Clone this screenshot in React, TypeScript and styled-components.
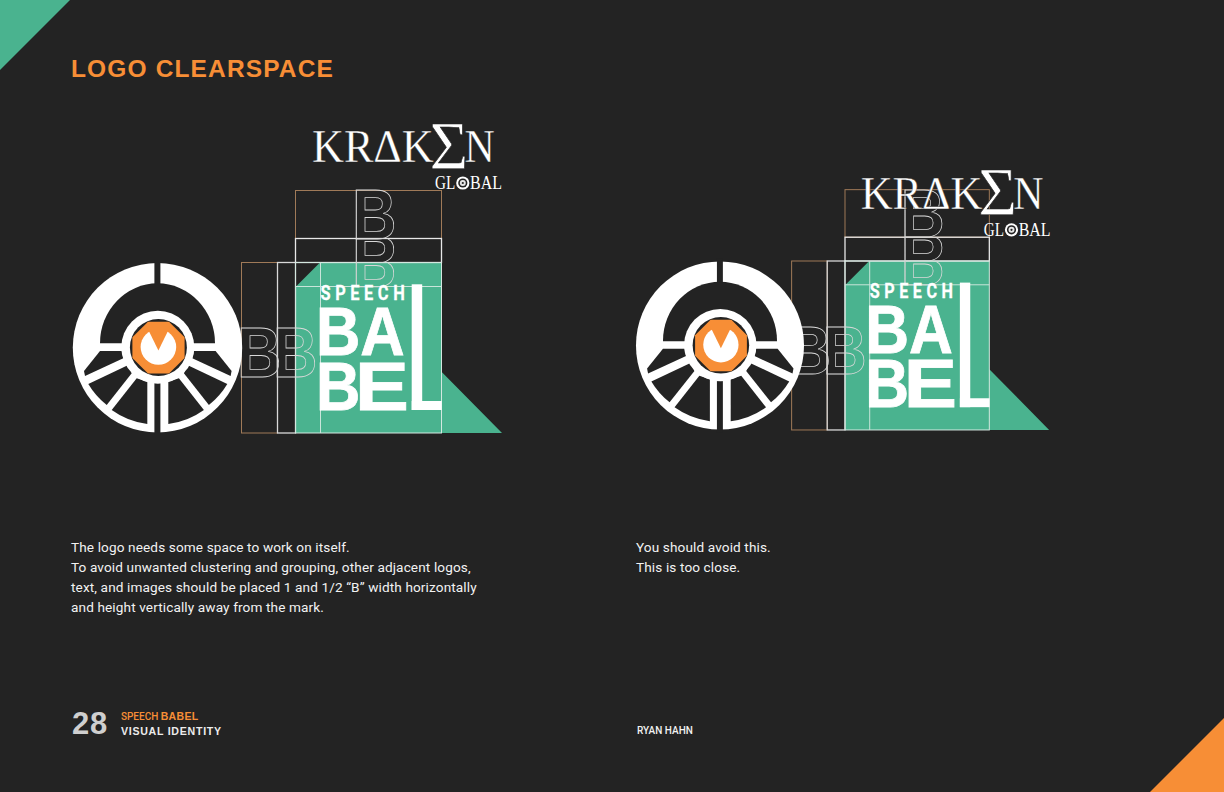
import React from "react";
import styled, { createGlobalStyle } from "styled-components";

const ORANGE = "#f78e36";
const GREEN = "#4ab38f";
const DARK = "#232323";

const Global = createGlobalStyle`
  html, body { margin: 0; padding: 0; background: ${DARK}; }
`;

const Page = styled.div`
  position: relative;
  width: 1224px;
  height: 792px;
  overflow: hidden;
  background: ${DARK};
  color: #fff;
  display: flex;
  flex-direction: column;
  padding: 55px 0 0 71px;
  box-sizing: border-box;
`;

const Corner = styled.div<{ $at: "tl" | "br" }>`
  position: absolute;
  width: ${(p) => (p.$at === "tl" ? 70 : 74)}px;
  height: ${(p) => (p.$at === "tl" ? 70 : 74)}px;
  ${(p) => (p.$at === "tl" ? "left:0;top:0;" : "right:0;bottom:0;")}
  background: ${(p) => (p.$at === "tl" ? GREEN : ORANGE)};
  clip-path: ${(p) =>
    p.$at === "tl" ? "polygon(0 0,100% 0,0 100%)" : "polygon(100% 0,100% 100%,0 100%)"};
`;

const Title = styled.h1`
  margin: 0;
  font: 700 24.5px/28px "Liberation Sans", Arial, sans-serif;
  letter-spacing: 1.14px;
  color: ${ORANGE};
`;

const Columns = styled.div`
  display: grid;
  grid-template-columns: 565px 565px;
`;

const Figures = styled(Columns)`
  margin-top: 32px;
`;

const Art = styled.svg`
  display: block;
  width: 450px;
  height: 330px;
  overflow: visible;
`;

const Captions = styled(Columns)`
  margin-top: 92px;
`;

const Caption = styled.p`
  margin: 0;
  font: 400 13.6px/20px Roboto, "Liberation Sans", sans-serif;
  letter-spacing: 0.12px;
  color: #f2f2f2;
`;

const Footer = styled(Columns)`
  position: absolute;
  left: 71px;
  top: 706px;
`;

const Folio = styled.div`
  display: flex;
  align-items: center;
  gap: 13px;
  padding-left: 1px;
`;

const PageNumber = styled.span`
  font: 700 31px/36px "Liberation Sans", Arial, sans-serif;
  letter-spacing: 0.7px;
  color: #cfcfcf;
`;

const FolioText = styled.div`
  display: flex;
  flex-direction: column;
  gap: 2px;
`;

const Brand = styled.span`
  font: 500 10px/13px Roboto, "Liberation Sans", sans-serif;
  color: ${ORANGE};
  b {
    font: 700 10.5px/13px "Liberation Sans", Arial, sans-serif;
    letter-spacing: 0.3px;
  }
`;

const Section = styled.span`
  font: 700 10.6px/13px "Liberation Sans", Arial, sans-serif;
  letter-spacing: 0.74px;
  color: #ececec;
`;

const Author = styled.span`
  align-self: end;
  font: 500 10px/13px Roboto, "Liberation Sans", sans-serif;
  color: #f2f2f2;
  padding: 0 0 5px 1px;
`;

const OutlineLetter = styled.text`
  font: 700 70px "Liberation Sans", Arial, sans-serif;
  fill: none;
  stroke: #d8d8d8;
  stroke-width: 0.8px;
`;

const MarkSmall = styled.text`
  font: 700 21px Roboto, "Liberation Sans", sans-serif;
  fill: #fff;
  stroke: #fff;
  stroke-width: 0.3px;
`;

const MarkBig = styled.text`
  font: 700 69px "Liberation Sans", Arial, sans-serif;
  fill: #fff;
  stroke: #fff;
  stroke-width: 0.8px;
`;

const Serif = styled.text<{ $size: number; $thin?: number }>`
  font: 400 ${(p) => p.$size}px "Liberation Serif", "Times New Roman", serif;
  fill: #fff;
  stroke: ${DARK};
  stroke-width: ${(p) => p.$thin ?? 0}px;
`;

const Wheel: React.FC<{ transform?: string }> = ({ transform }) => {
  const half = (
    <>
      <path d="M100 351L121.7 351L123.3 358.3L85 376L84 371Z" fill={DARK} />
      <path d="M88.3 384L128.3 365L131.7 373.3L106.7 405A77 77 0 0 1 88.3 384Z" fill={DARK} />
      <path d="M111.7 410L136.7 378.3L147.3 381.7L147.3 424A77 77 0 0 1 111.7 410Z" fill={DARK} />
    </>
  );
  return (
    <g transform={transform}>
      <circle cx="157.5" cy="347.7" r="84.7" fill="#fff" />
      <path d="M100 343.3A57.5 60 0 0 1 215 343.3Z" fill={DARK} />
      <rect x="154.4" y="260" width="6" height="24" fill={DARK} />
      <rect x="154.4" y="380" width="6" height="55" fill={DARK} />
      {half}
      <g transform="translate(315.6 0) scale(-1 1)">{half}</g>
      <circle cx="157.8" cy="347.3" r="36.5" fill="#fff" />
      <circle cx="158.4" cy="347.5" r="28.5" fill={DARK} />
      <path
        d="M148 321.7H169L184.6 337.3V358L169 373.6H148L132.4 358V337.3Z"
        fill={ORANGE}
      />
      <circle cx="158.4" cy="347" r="17.8" fill="#fff" />
      <path d="M146.4 326H170.4L158.4 350.5Z" fill={ORANGE} />
    </g>
  );
};

const OutlineB: React.FC<{ x: number; y: number }> = ({ x, y }) => (
  <OutlineLetter transform={`translate(${x - 4.5} ${y}) scale(0.88 1)`}>B</OutlineLetter>
);

const Construction: React.FC<{ id: string; transform?: string }> = ({ id, transform }) => (
  <g transform={transform}>
    <defs>
      <clipPath id={`${id}-a`}>
        <rect x="340" y="238.5" width="70" height="24" />
      </clipPath>
      <clipPath id={`${id}-b`}>
        <rect x="340" y="262.5" width="70" height="25" />
      </clipPath>
    </defs>
    <path d="M320 262.5H441.5V371.7L502 433H295.5V287Z" fill={GREEN} />
    <g fill="none" strokeWidth="1">
      <rect x="241.5" y="262.5" width="36" height="170.5" stroke="#a07a58" />
      <rect x="295.5" y="190.5" width="146" height="48" stroke="#a07a58" />
      <rect x="277.5" y="262.5" width="18" height="170.5" stroke="#d9d9d9" strokeWidth="1.3" />
      <rect x="295.5" y="238.5" width="146" height="24" stroke="#e8e8e8" strokeWidth="1.3" />
      <rect x="295.5" y="262.5" width="146" height="170.5" stroke="#d4e8e0" />
      <path d="M320.5 262.5V433M295.5 286.5H441.5" stroke="#c9e5da" />
      <path d="M356.5 190.5V286.5" stroke="#c9c9c9" strokeWidth="0.8" />
    </g>
    <OutlineB x={356.5} y={238.5} />
    <g clipPath={`url(#${id}-a)`}>
      <OutlineB x={356.5} y={262.5} />
    </g>
    <g clipPath={`url(#${id}-b)`}>
      <OutlineB x={356.5} y={286.5} />
    </g>
    <OutlineB x={241.5} y={376.5} />
    <OutlineB x={277.5} y={376.5} />
    <MarkSmall transform="translate(320.5 300) scale(0.78 1)" textLength="108" lengthAdjust="spacing">
      SPEECH
    </MarkSmall>
    <MarkBig transform="translate(316 355) scale(0.89 1)">BA</MarkBig>
    <MarkBig transform="translate(316 410) scale(0.89 1)">B</MarkBig>
    <MarkBig transform="translate(355 410) scale(1.17 1)">E</MarkBig>
    {/* the tall L of the logotype is a drawn bar, longer than any font's L */}
    <rect x="411.7" y="284.3" width="10.5" height="125.7" fill="#fff" />
    <rect x="411.7" y="401" width="30" height="9" fill="#fff" />
  </g>
);

const Kraken: React.FC<{ transform?: string }> = ({ transform }) => (
  <g transform={transform}>
    <Serif $size={47} $thin={0.35} transform="translate(312 161.7) scale(0.94 1)">
      KRΔK
    </Serif>
    <Serif $size={68} $thin={0.6} transform="translate(429.5 167.5) scale(0.98 1)">
      Σ
    </Serif>
    <Serif $size={47} $thin={0.35} transform="translate(464.5 161.7) scale(0.89 1)">
      N
    </Serif>
    <Serif $size={19} transform="translate(435 189) scale(0.8 1)">
      GL
    </Serif>
    <circle cx="462.8" cy="183" r="6.6" fill="#fff" />
    <circle cx="462.8" cy="183" r="4.6" fill={DARK} />
    <circle cx="462.8" cy="183" r="3" fill="#e6e6e6" />
    <circle cx="462.8" cy="183" r="1.1" fill={DARK} />
    <Serif $size={19} transform="translate(470 189) scale(0.84 1)">
      BAL
    </Serif>
  </g>
);

export default function App() {
  return (
    <Page>
      <Global />
      <Corner $at="tl" />
      <Corner $at="br" />
      <Title>LOGO CLEARSPACE</Title>
      <Figures>
        <Art viewBox="71 115 450 330">
          <Construction id="near" />
          <Kraken />
          <Wheel />
        </Art>
        <Art viewBox="636 115 450 330">
          <Construction id="far" transform="translate(845 261) scale(0.9885 0.991) translate(-295.5 -262.5)" />
          <Wheel transform="translate(720 345.5) scale(0.992) translate(-157.5 -347.7)" />
          <Kraken transform="translate(548.7 46.8)" />
        </Art>
      </Figures>
      <Captions>
        <Caption>
          The logo needs some space to work on itself.
          <br />
          To avoid unwanted clustering and grouping, other adjacent logos,
          <br />
          text, and images should be placed 1 and 1/2 “B” width horizontally
          <br />
          and height vertically away from the mark.
        </Caption>
        <Caption>
          You should avoid this.
          <br />
          This is too close.
        </Caption>
      </Captions>
      <Footer>
        <Folio>
          <PageNumber>28</PageNumber>
          <FolioText>
            <Brand>
              SPEECH <b>BABEL</b>
            </Brand>
            <Section>VISUAL IDENTITY</Section>
          </FolioText>
        </Folio>
        <Author>RYAN HAHN</Author>
      </Footer>
    </Page>
  );
}
